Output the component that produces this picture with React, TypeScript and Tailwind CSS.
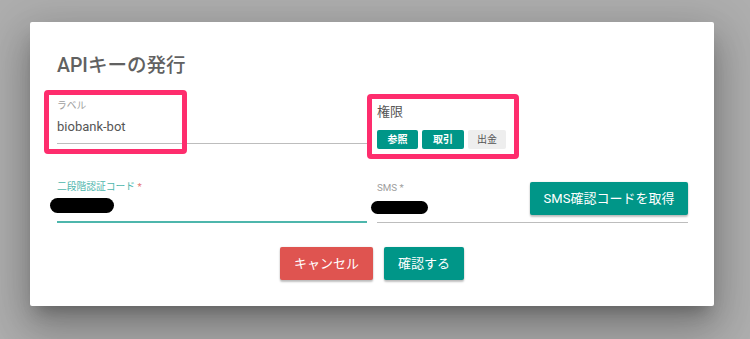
import React from "react";

export default function App() {
  return (
    <div className="w-[750px] h-[339px] overflow-hidden bg-[#aeaeae] pt-[22px] pl-[30px] font-['Roboto','Noto_Sans_CJK_JP',sans-serif]">
      <div className="relative w-[684px] h-[284px] bg-white rounded-[2px] shadow-[0_11px_15px_-7px_rgba(0,0,0,0.25),0_24px_38px_3px_rgba(0,0,0,0.18),0_9px_46px_8px_rgba(0,0,0,0.14)] pt-[32px] pl-[27px] pr-[26px]">
        <h1 className="text-[19.5px] leading-[24px] font-medium text-[#616161]">APIキーの発行</h1>

        {/* Row 1 */}
        <div className="flex gap-[10px] h-[66px] items-start">
          <div className="w-[310px] pt-[22px] pb-[7px] border-b border-[#bdbdbd]">
            <div className="text-[9.75px] leading-[12px] text-[#9e9e9e]">ラベル</div>
            <div className="mt-[6px] text-[13px] leading-[18px] text-[#555555]">biobank-bot</div>
          </div>
          <div className="flex-1 pt-[25px]">
            <div className="text-[13px] leading-[18px] text-[#555555]">権限</div>
            <div className="mt-[9px] flex gap-[4px]">
              <span className="w-[41px] h-[19px] rounded-[2px] bg-[#009688] text-white text-[10px] font-bold flex items-center justify-center">参照</span>
              <span className="w-[42px] h-[19px] rounded-[2px] bg-[#009688] text-white text-[10px] font-bold flex items-center justify-center">取引</span>
              <span className="w-[38px] h-[19px] rounded-[2px] bg-[#eeeeee] text-[#555555] text-[10px] flex items-center justify-center">出金</span>
            </div>
          </div>
        </div>

        {/* Row 2 */}
        <div className="flex gap-[10px]">
          <div className="w-[310px] pt-[37px] border-b-2 border-[#4db6ac]">
            <div className="text-[9.75px] leading-[12px] text-[#4db6ac]">
              二段階認証コード <span className="text-[#e57373]">*</span>
            </div>
            <div className="relative h-[28px]">
              <div className="absolute left-[-7px] top-[5px] w-[64px] h-[15px] rounded-full bg-black" />
            </div>
          </div>
          <div className="flex-1 pt-[37px] border-b border-[#bdbdbd] flex items-end">
            <div className="flex-1">
              <div className="text-[9.75px] leading-[12px] text-[#9e9e9e]">SMS *</div>
              <div className="relative h-[28px]">
                <div className="absolute left-[-6px] top-[7px] w-[57px] h-[13px] rounded-full bg-black" />
              </div>
            </div>
            <button className="mb-[7px] w-[158px] h-[33px] rounded-[2px] bg-[#009688] text-white text-[13px] shadow-[0_2px_2px_rgba(0,0,0,0.24),0_0_2px_rgba(0,0,0,0.12)]">
              SMS確認コードを取得
            </button>
          </div>
        </div>

        {/* Actions */}
        <div className="mt-[24px] flex justify-center gap-[11px] pr-[1px]">
          <button className="w-[93px] h-[33px] rounded-[2px] bg-[#df5450] text-white text-[13px] shadow-[0_2px_2px_rgba(0,0,0,0.24),0_0_2px_rgba(0,0,0,0.12)]">
            キャンセル
          </button>
          <button className="w-[80px] h-[33px] rounded-[2px] bg-[#009688] text-white text-[13px] shadow-[0_2px_2px_rgba(0,0,0,0.24),0_0_2px_rgba(0,0,0,0.12)]">
            確認する
          </button>
        </div>

        {/* Annotation boxes */}
        <div className="absolute left-[14px] top-[68px] w-[143px] h-[64px] border-[5px] border-[#fe2d6d] rounded-[4px]" />
        <div className="absolute left-[337px] top-[72px] w-[152px] h-[65px] border-[5px] border-[#fe2d6d] rounded-[4px]" />
      </div>
    </div>
  );
}
